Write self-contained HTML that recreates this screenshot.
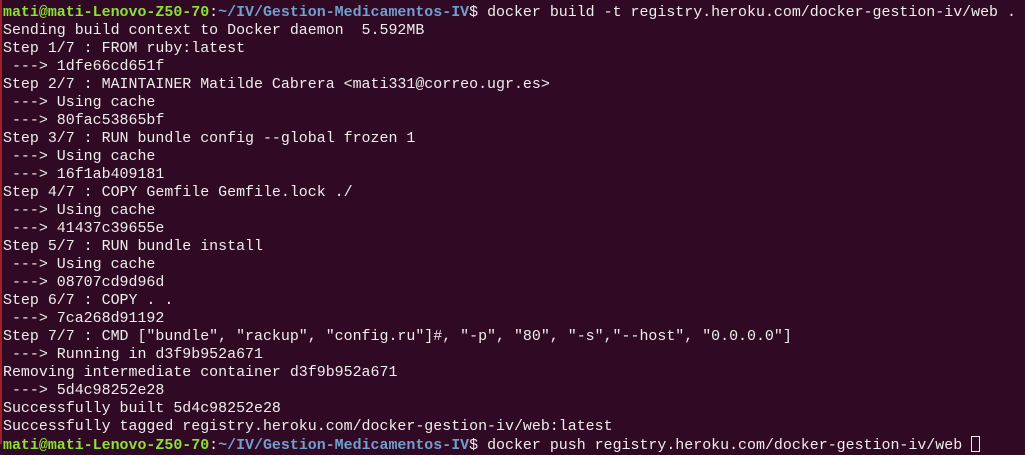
<!DOCTYPE html>
<html><head><meta charset="utf-8"><style>
html,body{margin:0;padding:0;}
body{width:1025px;height:444px;overflow:hidden;background:#300a24;position:relative;}
.bl{position:absolute;left:0;top:0;width:2px;height:444px;background:#a0202a;}
pre{margin:0;position:absolute;left:3px;top:4px;font-family:"Liberation Mono",monospace;font-size:14.95px;line-height:18px;color:#eeeeec;white-space:pre;}
.g{color:#8ae234;font-weight:bold}
.b{color:#729fcf;font-weight:bold}
.cur{display:inline-block;width:9px;height:16px;border:1px solid #eeeeec;vertical-align:-3px;box-sizing:border-box;}
</style></head><body><div class="bl"></div><pre><span class="g">mati@mati-Lenovo-Z50-70</span>:<span class="b">~/IV/Gestion-Medicamentos-IV</span>$ docker build -t registry.heroku.com/docker-gestion-iv/web .
Sending build context to Docker daemon  5.592MB
Step 1/7 : FROM ruby:latest
 ---> 1dfe66cd651f
Step 2/7 : MAINTAINER Matilde Cabrera &lt;mati331@correo.ugr.es&gt;
 ---> Using cache
 ---> 80fac53865bf
Step 3/7 : RUN bundle config --global frozen 1
 ---> Using cache
 ---> 16f1ab409181
Step 4/7 : COPY Gemfile Gemfile.lock ./
 ---> Using cache
 ---> 41437c39655e
Step 5/7 : RUN bundle install
 ---> Using cache
 ---> 08707cd9d96d
Step 6/7 : COPY . .
 ---> 7ca268d91192
Step 7/7 : CMD ["bundle", "rackup", "config.ru"]#, "-p", "80", "-s","--host", "0.0.0.0"]
 ---> Running in d3f9b952a671
Removing intermediate container d3f9b952a671
 ---> 5d4c98252e28
Successfully built 5d4c98252e28
Successfully tagged registry.heroku.com/docker-gestion-iv/web:latest
<span class="g">mati@mati-Lenovo-Z50-70</span>:<span class="b">~/IV/Gestion-Medicamentos-IV</span>$ docker push registry.heroku.com/docker-gestion-iv/web <span class="cur"></span></pre></body></html>
